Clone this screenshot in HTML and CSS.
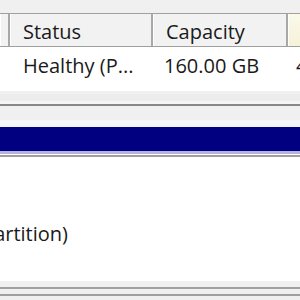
FILE: index.html
```html
<!DOCTYPE html>
<html>
<head>
<meta charset="utf-8">
<link rel="stylesheet" href="styles.css">
</head>
<body>
<div class="list">
  <div class="strip"></div>
  <div class="header">
    <div class="hcell c0"></div>
    <div class="hcell c1">Status</div>
    <div class="hcell c2">Capacity</div>
    <div class="hcell c3"></div>
  </div>
  <div class="row">
    <div class="cell c0"></div>
    <div class="cell c1">Healthy (P...</div>
    <div class="cell c2">160.00 GB</div>
    <div class="cell c3">45.00 GB</div>
  </div>
</div>
<div class="splitter">
  <div class="s1"></div>
  <div class="s2"></div>
  <div class="s3"></div>
  <div class="s4"></div>
</div>
<div class="graph">
  <div class="bar"></div>
  <div class="bar-edge"></div>
  <div class="bar-line"></div>
  <div class="part">
    <div class="part-text">Healthy (System, Boot, Page File, Active, Crash Dump, Primary Partition)</div>
  </div>
</div>
<div class="bottom">
  <div class="b1"></div>
  <div class="b2"></div>
  <div class="b3"></div>
  <div class="b4"></div>
  <div class="b5"></div>
</div>
</body>
</html>
```
FILE: styles.css
```css
html, body {
  margin: 0;
  padding: 0;
  width: 300px;
  height: 300px;
  overflow: hidden;
  background: #ffffff;
  font-family: "Open Sans", "Noto Sans", sans-serif;
  font-size: 20px;
  color: #1a1a1a;
}
.list {
  display: flex;
  flex-direction: column;
}
.strip {
  height: 13px;
  background: #f0f0f0;
}
.header {
  display: flex;
  height: 32px;
  border-top: 1px solid #a0a0a0;
  border-bottom: 1px solid #a0a0a0;
  background: #f2f2f2;
}
.hcell {
  box-sizing: border-box;
  flex: none;
  border-right: 2px solid #a8a8a8;
  box-shadow: inset 1px 0 0 #ffffff;
  padding-left: 13px;
  padding-top: 3px;
  line-height: 29px;
  white-space: nowrap;
  overflow: hidden;
}
.c0 { width: 10px; padding-left: 0; }
.c1 { width: 143px; }
.c2 { width: 135px; }
.c3 { width: 40px; border-right: none; }
.hcell.c3 { background: linear-gradient(#fbf9ea, #f6f1d8); }
.row {
  display: flex;
  height: 44px;
  background: #ffffff;
}
.cell {
  box-sizing: border-box;
  flex: none;
  padding-left: 13px;
  padding-top: 5px;
  white-space: nowrap;
  overflow: hidden;
}
.cell.c0 { padding-left: 0; }
.cell.c2 { padding-left: 11px; }
.cell.c3 { padding-left: 8px; }
.splitter {
  display: flex;
  flex-direction: column;
}
.s1 { height: 3px; background: #f0f0f0; }
.s2 { height: 7px; background: #ececec; }
.s3 { height: 3px; background: #f4f4f4; }
.s4 { height: 2px; background: #888888; }
.graph {
  box-sizing: border-box;
  display: flex;
  flex-direction: column;
  padding-top: 21px;
  background: linear-gradient(#f0f0f0 0, #f0f0f0 14px, #f7f6fb 15px, #f2f1f6 21px, #ffffff 21px);
  height: 175px;
}
.bar {
  height: 24px;
  background: #000080;
}
.bar-edge {
  height: 3px;
  background: #b4b4dc;
}
.bar-line {
  margin-top: 1px;
  height: 2px;
  background: #a0a0a0;
}
.part {
  width: 68px;
  display: flex;
  justify-content: flex-end;
  white-space: nowrap;
  margin-top: 63px;
}
.part-text {
  flex: none;
}
.bottom {
  display: flex;
  flex-direction: column;
}
.b1 { height: 6px; background: #f0f0f0; }
.b2 { height: 2px; background: #a0a0a0; }
.b3 { height: 5px; background: #f0f0f0; }
.b4 { height: 2px; background: #a0a0a0; }
.b5 { height: 10px; background: #f0f0f0; }
```
